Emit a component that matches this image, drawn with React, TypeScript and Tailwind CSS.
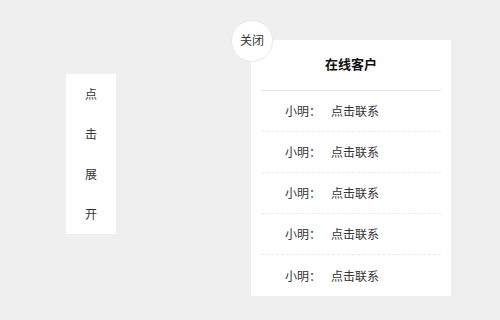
export default function App() {
  const rows = [0, 1, 2, 3, 4];
  return (
    <div
      className="w-[500px] h-[320px] bg-[#efefef] flex items-start text-[12px] text-[#333]"
      style={{ fontFamily: '"Liberation Sans", "Noto Sans CJK SC", sans-serif' }}
    >
      <div className="ml-[66px] mt-[74px] w-[50px] bg-white flex flex-col items-center">
        {["点", "击", "展", "开"].map((c) => (
          <div key={c} className="h-[40px] pt-[2px] flex items-center">{c}</div>
        ))}
      </div>
      <div className="relative ml-[135px] mt-[40px] w-[200px] bg-white px-[10px]">
        <div className="absolute left-[-20px] top-[-20px] w-[42px] h-[42px] rounded-full bg-white border border-[#e8e8e8] flex items-center justify-center text-[12px] text-[#333]">
          关闭
        </div>
        <div className="h-[51px] flex items-center justify-center font-bold text-[13px] text-[#111] border-b border-[#e6e6e6]">
          在线客户
        </div>
        {rows.map((i) => (
          <div
            key={i}
            className={`h-[41px] pt-[2px] flex items-center pl-[24px] ${i < 4 ? "border-b border-dashed border-[#eaeaea]" : ""}`}
          >
            <span>小明：</span>
            <span className="ml-[10px]">点击联系</span>
          </div>
        ))}
      </div>
    </div>
  );
}
